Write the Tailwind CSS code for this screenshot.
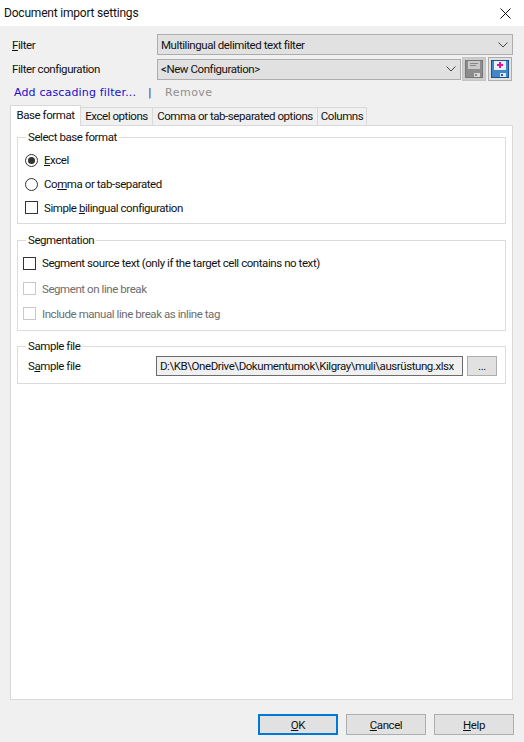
<!DOCTYPE html>
<html>
<head>
<meta charset="utf-8">
<script src="https://cdn.jsdelivr.net/npm/@tailwindcss/browser@4"></script>
</head>
<body class="w-[524px] h-[742px] overflow-hidden bg-[#f0f0f0] text-[11.5px] tracking-[-0.43px] leading-[16px] text-[#111] font-['Roboto','Liberation_Sans',sans-serif]">
<div class="flex h-[26px] items-center justify-between bg-white pl-[4px] pr-[13px]">
  <span class="text-[12px] tracking-[-0.2px]">Document import settings</span>
  <svg width="11" height="11" viewBox="0 0 11 11" fill="none" stroke="#111" stroke-width="1"><path d="M0.5 0.5L10.5 10.5M10.5 0.5L0.5 10.5"/></svg>
</div>

<div class="flex h-[716px] flex-col px-[10px] pl-[12px]">
  <div class="mt-[8px] flex h-[21px] items-center">
    <label class="w-[145px]"><span class="underline">F</span>ilter</label>
    <div class="flex h-[21px] w-[356px] items-center justify-between border border-[#adadad] bg-[#e1e1e1] pl-[3px] pr-[4px]">
      <span>Multilingual delimited text filter</span>
      <svg width="10" height="6" viewBox="0 0 10 6" fill="none" stroke="#444"><path d="M0.5 0.5L5 5L9.5 0.5"/></svg>
    </div>
  </div>
  <div class="mt-[2px] flex h-[24px] items-center">
    <label class="w-[145px]">Filter configuration</label>
    <div class="flex h-[21px] w-[304px] items-center justify-between border border-[#adadad] bg-[#e1e1e1] pl-[3px] pr-[4px]">
      <span>&lt;New Configuration&gt;</span>
      <svg width="10" height="6" viewBox="0 0 10 6" fill="none" stroke="#444"><path d="M0.5 0.5L5 5L9.5 0.5"/></svg>
    </div>
    <div class="ml-[1px] flex h-[24px] w-[24px] items-center justify-center border border-[#c4c4c4] bg-[#cccccc]">
      <svg width="18" height="18" viewBox="0 0 18 18"><rect x="0.5" y="0.5" width="17" height="17" fill="#8c8c8c" stroke="#777"/><rect x="3" y="1" width="12" height="8" fill="#c9c9c9"/><rect x="5" y="3" width="8" height="1" fill="#888"/><rect x="5" y="5" width="6" height="1" fill="#888"/><rect x="9" y="13" width="6" height="4" fill="#d9d9d9"/><rect x="10" y="14" width="2" height="2" fill="#888"/></svg>
    </div>
    <div class="ml-[2px] flex h-[24px] w-[24px] items-center justify-center border border-[#adadad] bg-[#e1e1e1]">
      <svg width="18" height="18" viewBox="0 0 18 18"><rect x="0.5" y="0.5" width="17" height="17" fill="#3f87c9" stroke="#1f4f8f"/><rect x="3" y="1" width="12" height="9" fill="#e6f0f8"/><path d="M9 2v6M6 5h6" stroke="#e6168a" stroke-width="2"/><rect x="9" y="13" width="6" height="4" fill="#dfe9f3"/><rect x="10" y="14" width="2" height="2" fill="#2b5f9e"/></svg>
    </div>
  </div>
  <div class="ml-[2px] mt-[1px] flex h-[22px] items-center font-['DejaVu_Sans',sans-serif] text-[11px] tracking-[0.15px]">
    <a class="w-[134px] text-[#1a0dcc]">Add cascading filter...</a>
    <span class="w-[17px] text-[#4b1a80]">|</span>
    <span class="text-[#8f8f8f] tracking-[0.5px]">Remove</span>
  </div>

  <div class="ml-[-2px] mt-[1px] flex h-[20px] items-end">
    <div class="z-10 mb-[-1px] flex h-[21px] w-[71px] items-center justify-center border border-b-0 border-[#d9d9d9] bg-white pb-[3px]">Base format</div>
    <div class="flex h-[18px] w-[72px] items-center justify-center whitespace-nowrap border border-l-0 border-b-0 border-[#d9d9d9] pb-[1px]">Excel options</div>
    <div class="flex h-[18px] w-[165px] items-center justify-center whitespace-nowrap border border-l-0 border-b-0 border-[#d9d9d9] pb-[1px]">Comma or tab-separated options</div>
    <div class="flex h-[18px] w-[49px] items-center justify-center whitespace-nowrap border border-l-0 border-b-0 border-[#d9d9d9] pb-[1px]">Columns</div>
  </div>
  <div class="ml-[-2px] h-[575px] w-[503px] border border-[#d9d9d9] bg-white px-[6px] pt-[3px]">
    <fieldset class="h-[95px] border border-[#dcdcdc] pl-[7px] pt-[3px]">
      <legend class="ml-[1px] px-[2px]">Select base format</legend>
      <div class="flex h-[24px] items-center">
        <span class="flex h-[13px] w-[13px] items-center justify-center rounded-full border border-[#333]"><span class="h-[7px] w-[7px] rounded-full bg-[#333]"></span></span>
        <span class="ml-[6px]"><span class="underline">E</span>xcel</span>
      </div>
      <div class="flex h-[24px] items-center">
        <span class="h-[13px] w-[13px] rounded-full border border-[#333]"></span>
        <span class="ml-[6px]">Co<span class="underline">m</span>ma or tab-separated</span>
      </div>
      <div class="flex h-[23px] items-center">
        <span class="h-[13px] w-[13px] border border-[#333]"></span>
        <span class="ml-[6px]">Simple <span class="underline">b</span>ilingual configuration</span>
      </div>
    </fieldset>
    <fieldset class="mt-[8px] h-[99px] border border-[#dcdcdc] pl-[5px] pt-[2px]">
      <legend class="ml-[3px] px-[2px]">Segmentation</legend>
      <div class="flex h-[26px] items-center">
        <span class="h-[13px] w-[13px] border border-[#333]"></span>
        <span class="ml-[6px]">Segment source text (only if the target cell contains no text)</span>
      </div>
      <div class="flex h-[25px] items-center text-[#6d6d6d]">
        <span class="h-[13px] w-[13px] border border-[#c9c9c9]"></span>
        <span class="ml-[6px]">Segment on line break</span>
      </div>
      <div class="flex h-[25px] items-center text-[#6d6d6d]">
        <span class="h-[13px] w-[13px] border border-[#c9c9c9]"></span>
        <span class="ml-[6px]">Include manual line break as inline tag</span>
      </div>
    </fieldset>
    <fieldset class="mt-[7px] h-[46px] border border-[#dcdcdc] pl-[10px] pt-[1px]">
      <legend class="ml-[-2px] px-[2px]">Sample file</legend>
      <div class="flex h-[22px] items-center">
        <span class="w-[128px]">S<span class="underline">a</span>mple file</span>
        <div class="flex h-[20px] w-[307px] items-center overflow-hidden whitespace-nowrap border border-[#6b6b6b] bg-[#f0f0f0] pl-[3px]">D:\KB\OneDrive\Dokumentumok\Kilgray\muli\ausrüstung.xlsx</div>
        <div class="ml-[4px] flex h-[20px] w-[30px] items-center justify-center border border-[#adadad] bg-[#e1e1e1]">...</div>
      </div>
    </fieldset>
  </div>

  <div class="mt-[14px] flex justify-end gap-[8px] pr-[0px]">
    <div class="flex h-[21px] w-[80px] items-center justify-center border-2 border-[#0078d7] bg-[#e1e1e1]"><span><span class="underline">O</span>K</span></div>
    <div class="flex h-[21px] w-[80px] items-center justify-center border border-[#adadad] bg-[#e1e1e1]"><span><span class="underline">C</span>ancel</span></div>
    <div class="flex h-[21px] w-[80px] items-center justify-center border border-[#adadad] bg-[#e1e1e1]"><span><span class="underline">H</span>elp</span></div>
  </div>
</div>
</body>
</html>
